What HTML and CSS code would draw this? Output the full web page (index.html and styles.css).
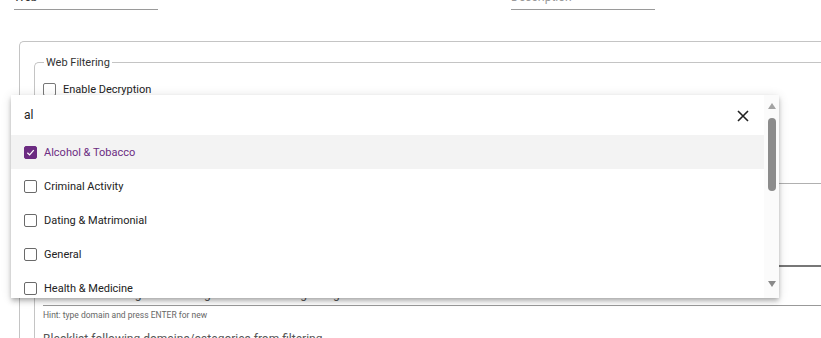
FILE: index.html
```html
<!DOCTYPE html>
<html lang="en">
<head>
  <meta charset="UTF-8" />
  <meta name="viewport" content="width=device-width, initial-scale=1.0" />
  <title>Web Filtering</title>
  <link rel="stylesheet" href="styles.css">
</head>
<body>
  <div class="page">
    <div class="top-row">
      <div class="field name"><span class="value">Web</span></div>
      <div class="field desc"><span class="placeholder">Description</span></div>
    </div>

    <div class="card">
      <fieldset class="group">
        <legend>Web Filtering</legend>
        <label class="check-row">
          <span class="box"></span>
          <span>Enable Decryption</span>
        </label>
        <div class="line-field first"></div>
        <div class="line-field second"></div>
        <div class="text-label top">Whitelist following domains regardless of filtering categories</div>
        <div class="domain-input"></div>
        <div class="hint">Hint: type domain and press ENTER for new</div>
        <div class="text-label bottom">Blacklist following domains/categories from filtering</div>
      </fieldset>
    </div>

    <div class="dropdown">
      <div class="options">
        <div class="search">
          <span class="query">al</span>
          <svg class="close" width="14" height="14" viewBox="0 0 14 14">
            <path d="M2 2 L12 12 M12 2 L2 12" stroke="#222" stroke-width="1.6" fill="none"/>
          </svg>
        </div>
        <div class="option active">
          <span class="box checked">
            <svg width="9" height="9" viewBox="0 0 10 10"><path d="M1.5 5.2 L4 7.6 L8.6 2.4" stroke="#fff" stroke-width="1.4" fill="none"/></svg>
          </span>
          <span>Alcohol &amp; Tobacco</span>
        </div>
        <div class="option"><span class="box"></span><span>Criminal Activity</span></div>
        <div class="option"><span class="box"></span><span>Dating &amp; Matrimonial</span></div>
        <div class="option"><span class="box"></span><span>General</span></div>
        <div class="option"><span class="box"></span><span>Health &amp; Medicine</span></div>
        <div class="option"><span class="box"></span><span>Hobbies &amp; Leisure</span></div>
      </div>
      <div class="scrollbar">
        <span class="arrow up"></span>
        <span class="thumb"></span>
        <span class="arrow down"></span>
      </div>
    </div>
  </div>
</body>
</html>
```

FILE: styles.css
```css
body {
  margin: 0;
  background: #fff;
  font-family: Roboto, "Liberation Sans", sans-serif;
  color: #222;
}
.page {
  position: relative;
  width: 821px;
  height: 338px;
  overflow: hidden;
}
.top-row {
  display: flex;
  margin-top: -10px;
  padding-left: 14px;
  gap: 353px;
}
.field {
  width: 144px;
  height: 19px;
  border-bottom: 1px solid #9a9a9a;
  font-size: 12px;
  line-height: 14px;
}
.field .value { color: #333; }
.field .placeholder { color: #9a9a9a; }

.card {
  margin: 31px 0 0 19px;
  border: 1px solid #c4c4c4;
  border-right: none;
  border-bottom: none;
  border-radius: 5px 0 0 0;
  padding: 14px 0 0 14px;
  height: 400px;
}
.group {
  margin: 0;
  border: 1px solid #c4c4c4;
  border-right: none;
  border-bottom: none;
  border-radius: 5px 0 0 0;
  padding: 12px 0 0 8px;
  height: 400px;
}
.group legend {
  font-size: 11px;
  color: #333;
  padding: 0 2px;
  margin-left: 1px;
}
.check-row {
  display: flex;
  align-items: center;
  gap: 7px;
  font-size: 11px;
  color: #222;
  height: 16px;
}
.box {
  width: 11px;
  height: 11px;
  border: 1px solid #777;
  border-radius: 2px;
  display: flex;
  align-items: center;
  justify-content: center;
  flex: none;
}
.line-field {
  border-bottom: 1px solid #b0b0b0;
}
.line-field.first { height: 86px; }
.line-field.second { height: 81px; border-bottom: 2px solid #777; }
.text-label {
  font-size: 12px;
  line-height: 14px;
  color: #555;
  white-space: nowrap;
}
.text-label.top { margin-top: 20px; }
.text-label.bottom { margin-top: 12px; }
.domain-input {
  height: 4px;
  border-bottom: 1px solid #999;
}
.hint {
  font-size: 8.5px;
  line-height: 10px;
  color: #666;
  margin-top: 4px;
}

.dropdown {
  position: absolute;
  left: 11px;
  top: 95px;
  width: 768px;
  height: 203px;
  background: #fff;
  display: flex;
  overflow: hidden;
  box-shadow: 0 2px 4px -1px rgba(0,0,0,.2), 0 4px 5px 0 rgba(0,0,0,.14), 0 1px 10px 0 rgba(0,0,0,.12);
}
.options {
  flex: 1;
}
.search {
  height: 40px;
  display: flex;
  align-items: center;
  justify-content: space-between;
  padding: 0 14px 0 13px;
  font-size: 12px;
  color: #222;
}
.close { margin-top: 1px; }
.option {
  height: 34px;
  display: flex;
  align-items: center;
  gap: 7px;
  padding-left: 13px;
  font-size: 11px;
  color: #222;
}
.option .box { border-color: #6a6a6a; }
.option.active {
  background: #f3f3f3;
  color: #6c2c82;
}
.box.checked {
  background: #6c2c82;
  border-color: #6c2c82;
}
.scrollbar {
  width: 15px;
  background: #fbfbfb;
  display: flex;
  flex-direction: column;
  align-items: center;
  padding-top: 8px;
}
.arrow {
  width: 0;
  height: 0;
  border-left: 4px solid transparent;
  border-right: 4px solid transparent;
}
.arrow.up { border-bottom: 6px solid #a3a3a3; }
.arrow.down { border-top: 6px solid #8a8a8a; margin-top: 90px; }
.thumb {
  width: 8px;
  height: 73px;
  margin-top: 9px;
  background: #8c8c8c;
  border-radius: 4px;
}
```
